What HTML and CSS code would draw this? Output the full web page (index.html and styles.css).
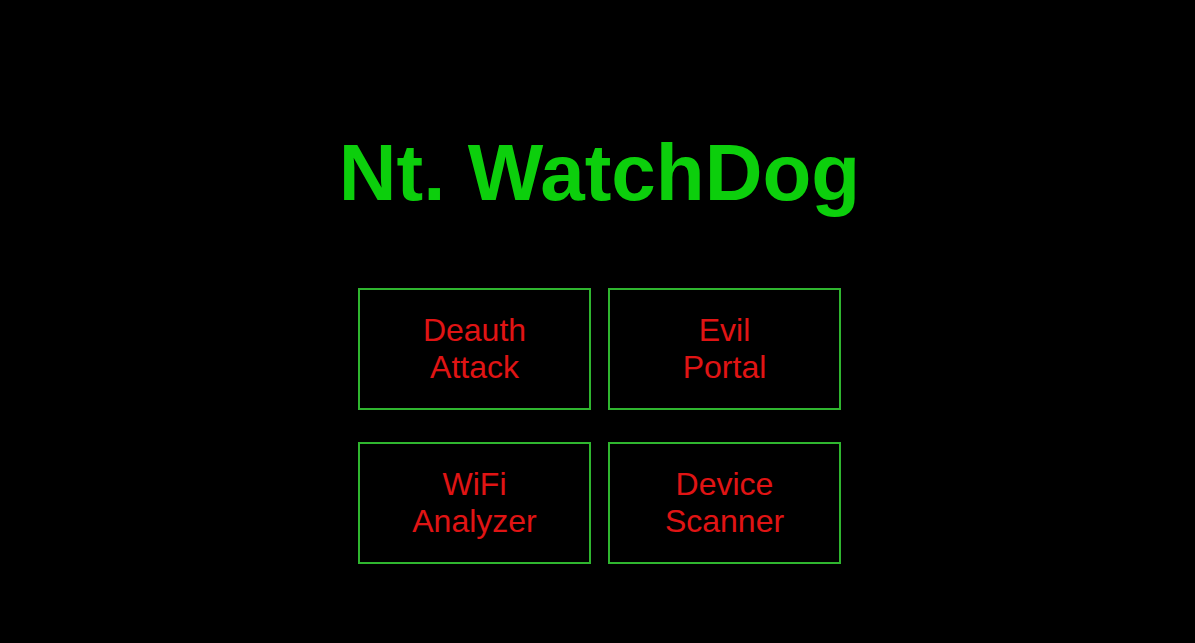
FILE: index.html
```html
<!DOCTYPE html>
<html lang="en">
<head>
<meta charset="utf-8">
<title>Nt. WatchDog</title>
<link rel="stylesheet" href="styles.css">
</head>
<body>
<main class="page">
  <h1 class="title">Nt. WatchDog</h1>
  <div class="menu">
    <button class="tile">Deauth<br>Attack</button>
    <button class="tile">Evil<br>Portal</button>
    <button class="tile">WiFi<br>Analyzer</button>
    <button class="tile">Device<br>Scanner</button>
  </div>
</main>
</body>
</html>
```
FILE: styles.css
```css
html, body {
  margin: 0;
  padding: 0;
  background: #000;
  height: 100%;
}
body {
  font-family: "Liberation Sans", Arial, sans-serif;
  overflow: hidden;
}
.page {
  display: flex;
  flex-direction: column;
  align-items: center;
  padding-top: 127px;
  padding-left: 4px;
}
.title {
  margin: 0;
  font-size: 80px;
  font-weight: bold;
  line-height: normal;
  color: #0ccf0c;
}
.menu {
  margin-top: 69px;
  display: grid;
  grid-template-columns: 233px 233px;
  column-gap: 17px;
  row-gap: 32px;
}
.tile {
  height: 122px;
  box-sizing: border-box;
  border: 2px solid #2fb52f;
  background: #000;
  color: #e01414;
  font-family: "Liberation Sans", Arial, sans-serif;
  font-size: 32px;
  line-height: normal;
  padding: 0;
  display: flex;
  align-items: center;
  justify-content: center;
  text-align: center;
}
```
